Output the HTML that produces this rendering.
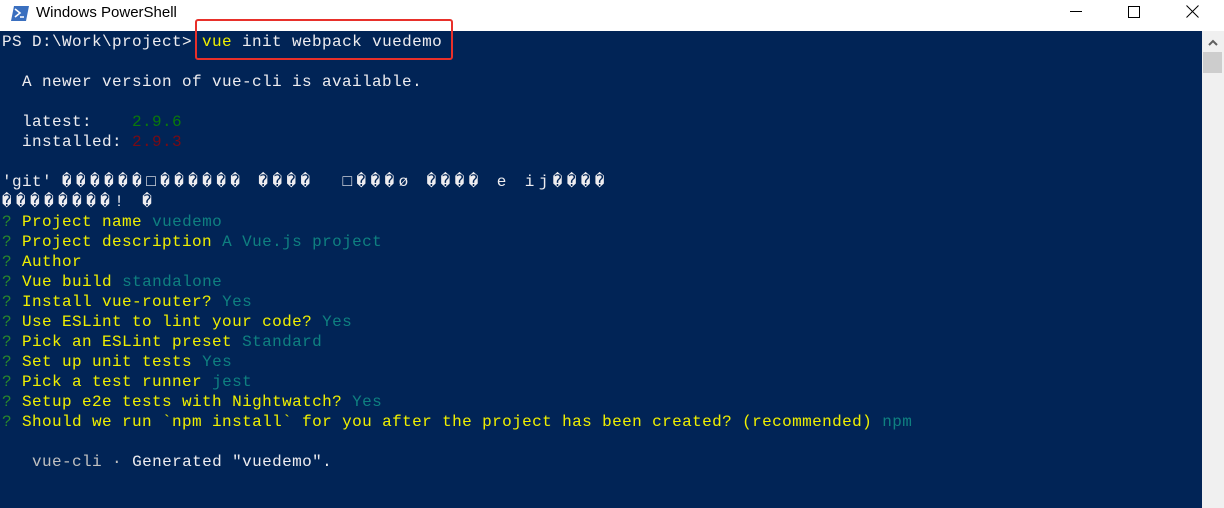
<!DOCTYPE html>
<html><head><meta charset="utf-8"><style>
html,body{margin:0;padding:0;width:1224px;height:508px;overflow:hidden;background:#fff;}
#title{position:absolute;left:0;top:0;width:1224px;height:31px;background:#fff;font-family:"Liberation Sans",sans-serif;font-size:15px;color:#000;}
#term{position:absolute;left:0;top:31px;width:1202px;height:477px;background:#012456;}
#sb{position:absolute;left:1202px;top:31px;width:22px;height:477px;background:#f0f0f0;}
.l{position:absolute;left:2px;height:20px;line-height:20px;white-space:pre;font-family:"Liberation Mono","Noto Sans CJK SC",monospace;font-size:16px;letter-spacing:0.4px;color:#eeedf0;}
.y{color:#f0f000}.g{color:#0a7a0a}.r{color:#7a0a14}.t{color:#0f8080}.q{color:#2a8a2a}.gr{color:#c0c0c0}
.x{letter-spacing:4.4px}
</style></head><body>
<div id="title">
<svg style="position:absolute;left:11px;top:6px" width="18" height="15"><polygon points="3,0 18,0 15,15 0,15" fill="#3a6fbf"/><path d="M4 3 L9 7 L4 11" stroke="#fff" stroke-width="1.6" fill="none"/><path d="M9 11 H13" stroke="#fff" stroke-width="1.5"/></svg>
<span style="position:absolute;left:36px;top:4px">Windows PowerShell</span>
<div style="position:absolute;left:1070px;top:11px;width:12px;height:1px;background:#000"></div>
<div style="position:absolute;left:1128px;top:6px;width:10px;height:10px;border:1px solid #000"></div>
<svg style="position:absolute;left:1186px;top:5px" width="13" height="13"><path d="M0.5 0.5L12.5 12.5M12.5 0.5L0.5 12.5" stroke="#000" stroke-width="1"/></svg>
</div>
<div id="term"></div>
<div id="sb"><svg style="position:absolute;left:6px;top:8px" width="10" height="7"><path d="M1 6L5 2L9 6" stroke="#606060" stroke-width="2" fill="none"/></svg><div style="position:absolute;left:1px;top:21px;width:19px;height:21px;background:#cdcdcd"></div></div>
<div class="l" style="top:32px">PS D:\Work\project&gt; <span class="y">vue</span> init webpack vuedemo</div>
<div style="position:absolute;left:195px;top:19px;width:258px;height:41px;border:2px solid #e8302a;border-radius:3px;box-sizing:border-box"></div>
<div class="l" style="top:72px">  A newer version of vue-cli is available.</div>
<div class="l" style="top:112px">  latest:    <span class="g">2.9.6</span></div>
<div class="l" style="top:132px">  installed: <span class="r">2.9.3</span></div>
<div class="l" style="top:172px">'git' <span class="x">������□������ ����  □���ø ���� e ij����</span></div>
<div class="l" style="top:192px"><span class="x">��������! �</span></div>
<div class="l" style="top:212px"><span class="q">?</span> <span class="y">Project name</span> <span class="t">vuedemo</span></div>
<div class="l" style="top:232px"><span class="q">?</span> <span class="y">Project description</span> <span class="t">A Vue.js project</span></div>
<div class="l" style="top:252px"><span class="q">?</span> <span class="y">Author</span></div>
<div class="l" style="top:272px"><span class="q">?</span> <span class="y">Vue build</span> <span class="t">standalone</span></div>
<div class="l" style="top:292px"><span class="q">?</span> <span class="y">Install vue-router?</span> <span class="t">Yes</span></div>
<div class="l" style="top:312px"><span class="q">?</span> <span class="y">Use ESLint to lint your code?</span> <span class="t">Yes</span></div>
<div class="l" style="top:332px"><span class="q">?</span> <span class="y">Pick an ESLint preset</span> <span class="t">Standard</span></div>
<div class="l" style="top:352px"><span class="q">?</span> <span class="y">Set up unit tests</span> <span class="t">Yes</span></div>
<div class="l" style="top:372px"><span class="q">?</span> <span class="y">Pick a test runner</span> <span class="t">jest</span></div>
<div class="l" style="top:392px"><span class="q">?</span> <span class="y">Setup e2e tests with Nightwatch?</span> <span class="t">Yes</span></div>
<div class="l" style="top:412px"><span class="q">?</span> <span class="y">Should we run `npm install` for you after the project has been created? (recommended)</span> <span class="t">npm</span></div>
<div class="l" style="top:452px">   <span class="gr">vue-cli</span> <span class="gr">·</span> Generated "vuedemo".</div>
</body></html>
